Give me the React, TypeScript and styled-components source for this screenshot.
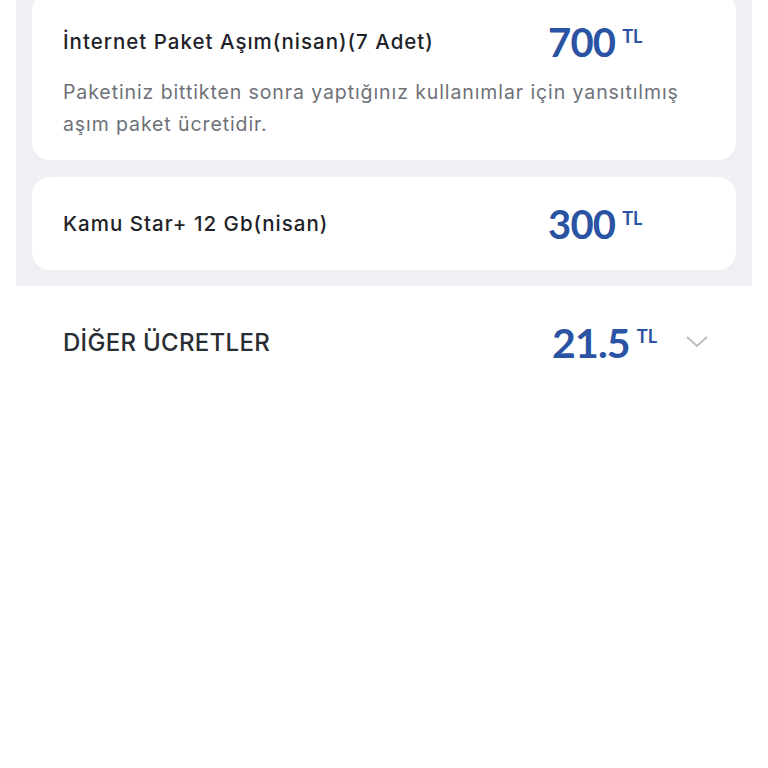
import React from 'react';
import styled, { createGlobalStyle } from 'styled-components';

const GlobalStyle = createGlobalStyle`
  html, body {
    margin: 0;
    padding: 0;
    background: #ffffff;
    font-family: 'Inter', 'Noto Sans', sans-serif;
  }
`;

type Item = {
  title: string;
  amount: string;
  description?: string;
};

const items: Item[] = [
  {
    title: 'İnternet Paket Aşım(nisan)(7 Adet)',
    amount: '700',
    description:
      'Paketiniz bittikten sonra yaptığınız kullanımlar için yansıtılmış aşım paket ücretidir.',
  },
  { title: 'Kamu Star+ 12 Gb(nisan)', amount: '300' },
];

const App = () => {
  return (
    <>
      <GlobalStyle />
      <Page>
        <Panel>
          {items.map((item) => (
            <Card key={item.title} hasDescription={!!item.description}>
              <CardHead>
                <Title>{item.title}</Title>
                <Price>
                  <Amount>{item.amount}</Amount>
                  <Currency>TL</Currency>
                </Price>
              </CardHead>
              {item.description && <Description>{item.description}</Description>}
            </Card>
          ))}
        </Panel>

        <SectionRow>
          <SectionTitle>DİĞER ÜCRETLER</SectionTitle>
          <SectionPrice>
            <Amount big>21.5</Amount>
            <Currency>TL</Currency>
          </SectionPrice>
          <Chevron viewBox='0 0 24 14'>
            <path d='M2 2 L12 11 L22 2' />
          </Chevron>
        </SectionRow>
      </Page>
    </>
  );
};

export default App;

const Page = styled.div`
  width: 768px;
  height: 768px;
  overflow: hidden;
  background: #ffffff;
`;

const Panel = styled.div`
  margin: -23px 16px 0;
  padding: 16px;
  background: #eef0f3;
  display: flex;
  flex-direction: column;
  gap: 17px;
`;

const Card = styled.div<{ hasDescription: boolean }>`
  background: #ffffff;
  border-radius: 18px;
  padding: ${({ hasDescription }) => (hasDescription ? '37px 31px 20px' : '35px 31px 34px')};
  display: flex;
  flex-direction: column;
  gap: 22px;
`;

const CardHead = styled.div`
  display: flex;
  align-items: center;
  height: 24px;
`;

const Title = styled.div`
  flex: 1;
  font-size: 20.5px;
  font-weight: 500;
  line-height: 24px;
  letter-spacing: 1px;
  color: #1f2329;
  white-space: nowrap;
`;

const Price = styled.div`
  width: 157px;
  display: flex;
  align-items: flex-start;
`;

const Amount = styled.span<{ big?: boolean }>`
  font-family: 'Lato', 'Noto Sans', sans-serif;
  font-size: ${({ big }) => (big ? '41px' : '40px')};
  line-height: 1;
  font-weight: 700;
  color: #2a53a3;
  letter-spacing: -0.8px;
`;

const Currency = styled.span`
  font-family: 'Lato', 'Noto Sans', sans-serif;
  font-size: 18px;
  line-height: 1;
  font-weight: 700;
  color: #2a53a3;
  margin-left: 7px;
  margin-top: 5px;
`;

const Description = styled.div`
  font-size: 19.5px;
  line-height: 32px;
  letter-spacing: 0.9px;
  color: #6e7178;
  padding-right: 12px;
`;

const SectionRow = styled.div`
  display: flex;
  align-items: center;
  height: 40px;
  padding: 36px 59px 0 63px;
`;

const SectionTitle = styled.div`
  flex: 1;
  font-size: 24px;
  font-weight: 500;
  color: #2a2d33;
  letter-spacing: 0.3px;
`;

const SectionPrice = styled.div`
  display: flex;
  align-items: flex-start;
  margin-right: 28px;
`;

const Chevron = styled.svg`
  width: 24px;
  height: 14px;
  fill: none;
  stroke: #b9bcc1;
  stroke-width: 2;
`;
